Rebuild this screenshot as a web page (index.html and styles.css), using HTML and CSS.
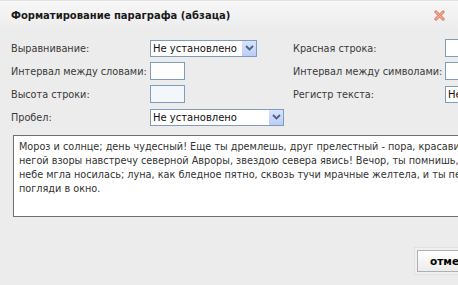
FILE: index.html
```html
<!DOCTYPE html>
<html lang="ru">
<head>
<meta charset="utf-8">
<title>Форматирование параграфа</title>
<link rel="stylesheet" href="styles.css">
</head>
<body>
<div class="dialog">
  <div class="titlebar">
    <span class="title">Форматирование параграфа (абзаца)</span>
    <span class="close" aria-label="закрыть">
      <svg width="11" height="11" viewBox="0 0 12 12">
        <path d="M2 2 L10 10 M10 2 L2 10" stroke="#e48c7c" stroke-width="3.4" stroke-linecap="round"/>
        <path d="M2.5 2.5 L9.5 9.5 M9.5 2.5 L2.5 9.5" stroke="#f6b8aa" stroke-width="1" stroke-linecap="round"/>
      </svg>
    </span>
  </div>
  <div class="body">
    <div class="form">
      <div class="col col-left">
        <label class="lbl">Выравнивание:</label>
        <div class="select sel-short"><span class="sel-text">Не установлено</span><span class="arrow"><svg width="9" height="6" viewBox="0 0 9 6"><path d="M1 1 L4.5 4.5 L8 1" fill="none" stroke="#4d6185" stroke-width="1.8"/></svg></span></div>
        <label class="lbl">Интервал между словами:</label>
        <div class="input"></div>
        <label class="lbl">Высота строки:</label>
        <div class="input input-focus"></div>
        <label class="lbl">Пробел:</label>
        <div class="select sel-long"><span class="sel-text">Не установлено</span><span class="arrow"><svg width="9" height="6" viewBox="0 0 9 6"><path d="M1 1 L4.5 4.5 L8 1" fill="none" stroke="#4d6185" stroke-width="1.8"/></svg></span></div>
      </div>
      <div class="col col-right">
        <label class="lbl">Красная строка:</label>
        <div class="input"></div>
        <label class="lbl">Интервал между символами:</label>
        <div class="input"></div>
        <label class="lbl">Регистр текста:</label>
        <div class="select sel-short"><span class="sel-text">Не установлено</span><span class="arrow"><svg width="9" height="6" viewBox="0 0 9 6"><path d="M1 1 L4.5 4.5 L8 1" fill="none" stroke="#4d6185" stroke-width="1.8"/></svg></span></div>
      </div>
    </div>
    <div class="preview">
      <div class="line">Мороз и солнце; день чудесный! Еще ты дремлешь, друг прелестный - пора, красавица, проснись: открой сомкнуты</div>
      <div class="line">негой взоры навстречу северной Авроры, звездою севера явись! Вечор, ты помнишь, вьюга злилась, на мутном</div>
      <div class="line">небе мгла носилась; луна, как бледное пятно, сквозь тучи мрачные желтела, и ты печальная сидела - а нынче...</div>
      <div class="line">погляди в окно.</div>
    </div>
    <div class="footer">
      <span class="btn-wrap"><span class="btn">отмена</span></span>
    </div>
  </div>
</div>
</body>
</html>
```
FILE: styles.css
```css
html, body {
  margin: 0;
  padding: 0;
  overflow: hidden;
  background: #ececec;
}
body {
  font-family: "DejaVu Sans", Tahoma, sans-serif;
  font-size: 9.7px;
  color: #3a3a3a;
  width: 458px;
  height: 285px;
}
.dialog {
  width: 640px;
}
.titlebar {
  height: 28px;
  display: flex;
  align-items: center;
  justify-content: space-between;
  padding: 0 0 0 11px;
  box-sizing: border-box;
  width: 458px;
  background: linear-gradient(#f7f7f7, #ededed);
  border-top: 1px solid #e2e2e2;
}
.title {
  font-weight: bold;
  color: #1a1a1a;
  font-size: 10px;
  padding-top: 2px;
}
.close {
  display: flex;
  margin-right: 13px;
  margin-top: 2px;
}
.body {
  padding: 11px 0 0 11px;
}
.form {
  display: flex;
}
.col {
  display: grid;
  grid-auto-rows: 18px;
  row-gap: 5px;
  align-items: center;
}
.col-left {
  width: 282px;
  grid-template-columns: 139px auto;
}
.col-right {
  grid-template-columns: 152px auto;
}
.lbl {
  white-space: nowrap;
}
.input {
  width: 33px;
  height: 16px;
  border: 1px solid #7f9db9;
  background: #fff;
  justify-self: start;
}
.input-focus {
  background: #f3f6fb;
}
.select {
  height: 15px;
  border: 1px solid #7f9db9;
  background: #fff;
  display: flex;
  align-items: center;
  justify-content: space-between;
  justify-self: start;
  padding-left: 2px;
  color: #111;
  font-size: 10px;
}
.sel-short { width: 103px; }
.sel-long { width: 130px; }
.sel-text { white-space: nowrap; }
.arrow {
  width: 15px;
  height: 15px;
  display: flex;
  align-items: center;
  justify-content: center;
  background: linear-gradient(#d8e4fc, #b9cdf6);
  border-left: 1px solid #fff;
  box-sizing: border-box;
}
.preview {
  margin: 9px 0 0 2px;
  width: 600px;
  height: 82px;
  box-sizing: border-box;
  border: 1px solid #6f6f6f;
  background: #fff;
  padding: 4px 5px;
  line-height: 14px;
  font-size: 9.7px;
  color: #333;
}
.line {
  white-space: nowrap;
}
.footer {
  margin-top: 30px;
  padding-left: 403px;
}
.btn-wrap {
  display: inline-block;
  padding: 2px;
  border: 1px solid #e2e2e2;
  background: #f0f0f0;
}
.btn {
  display: inline-block;
  height: 20px;
  line-height: 20px;
  padding: 0 12px;
  border: 1px solid #b0b0b0;
  background: linear-gradient(#ffffff, #ececec);
  font-weight: bold;
  color: #000;
  font-size: 10.5px;
}
```
